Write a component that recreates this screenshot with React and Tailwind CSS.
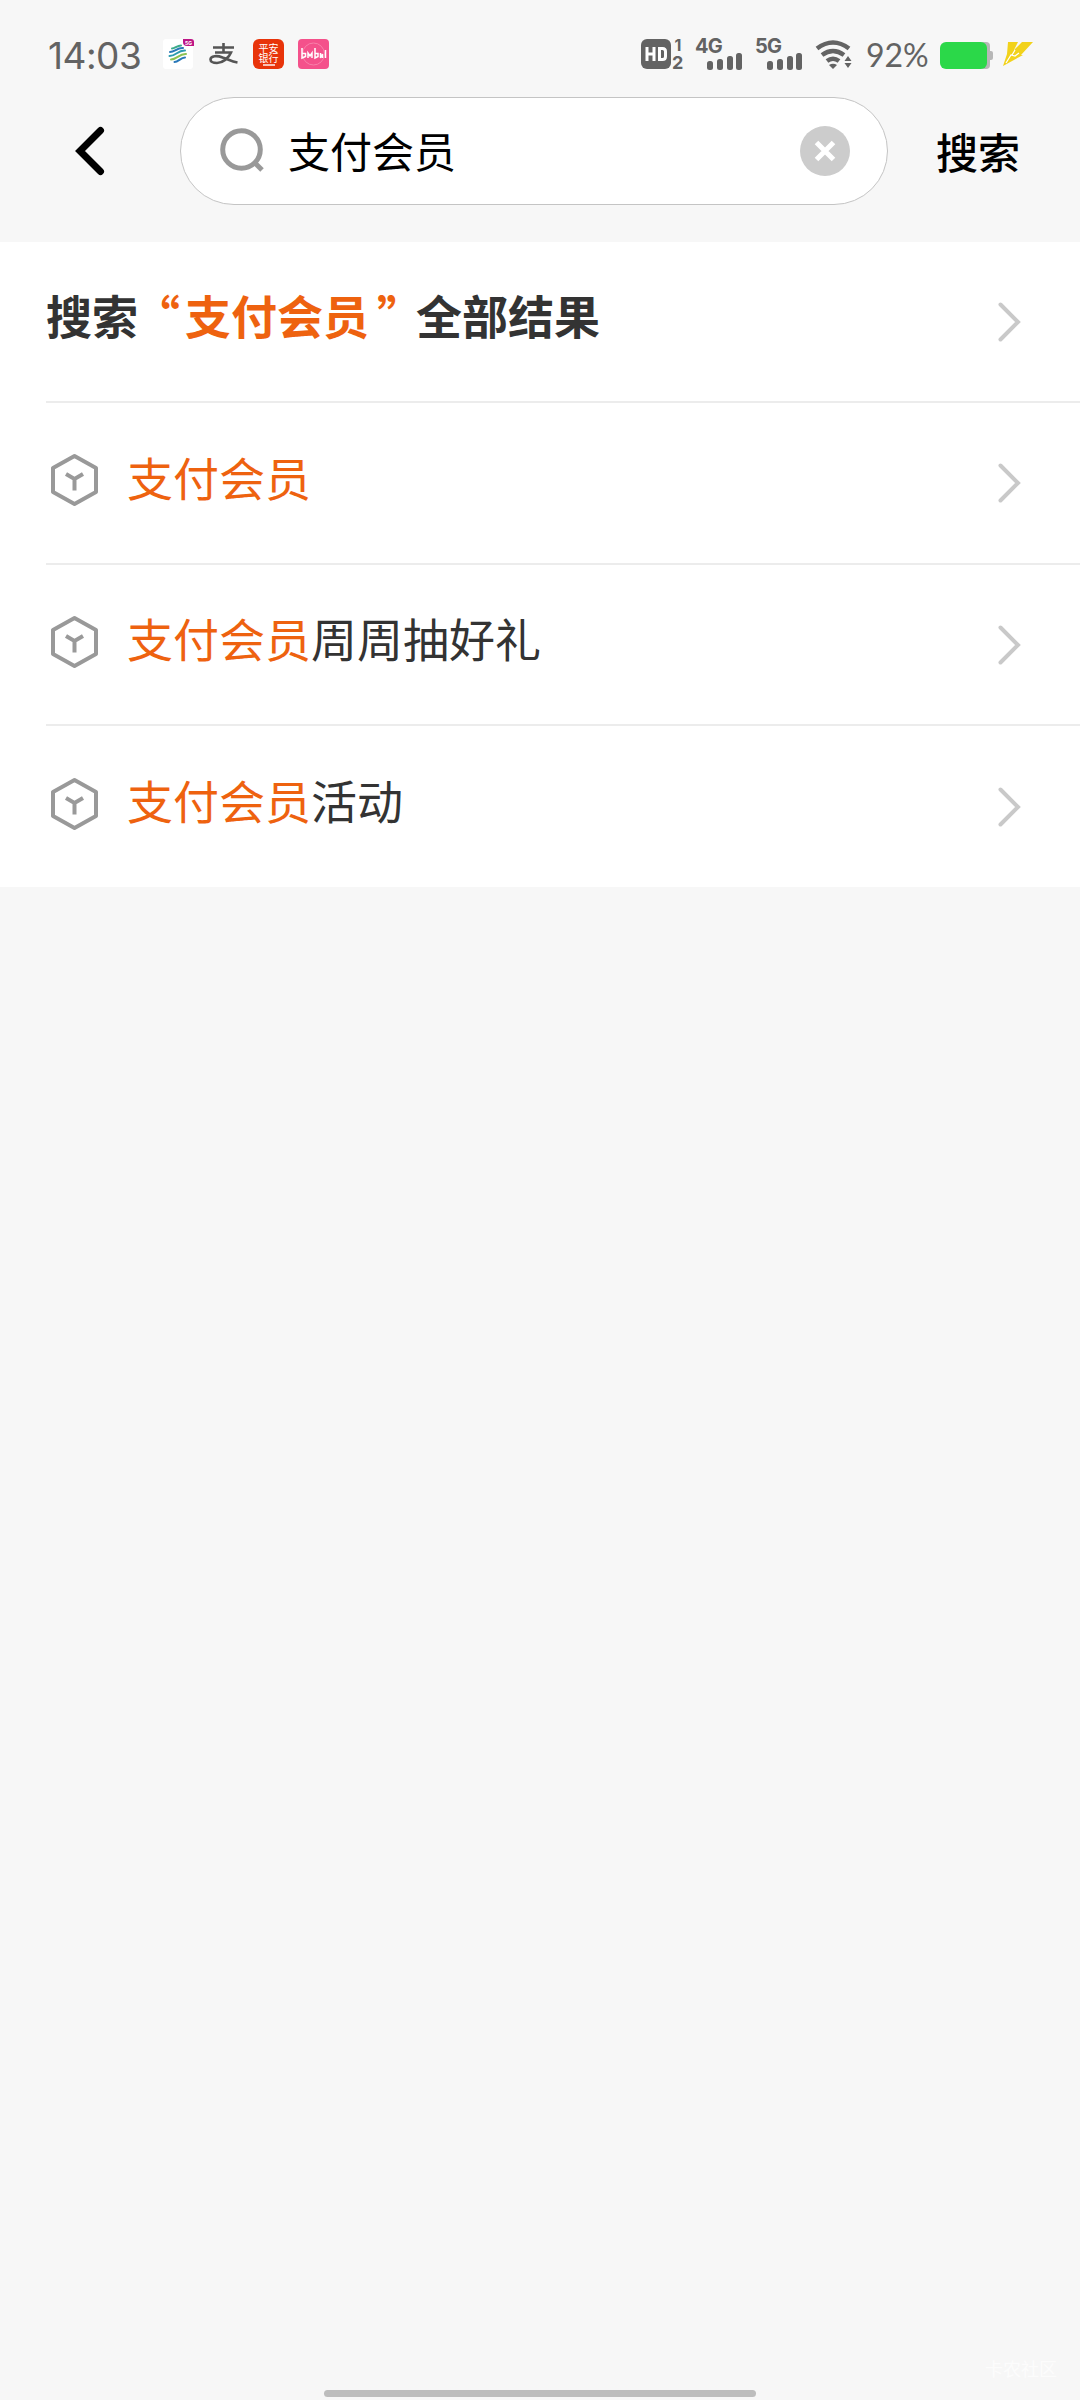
import React from 'react';

const keyword = '支付会员';

const suggestions = [
  { rest: '', row: 'h-[162px] border-b-2' },
  { rest: '周周抽好礼', row: 'h-[161px] border-b-2' },
  { rest: '活动', row: 'h-[161px]' },
];

function SignalBars() {
  return (
    <svg width="36" height="18" viewBox="0 0 36 18" fill="#636363">
      <rect x="0" y="8" width="6" height="9" rx="2.5" />
      <rect x="10" y="6" width="6" height="11" rx="2.5" />
      <rect x="20" y="3" width="6" height="14" rx="2.5" />
      <rect x="29" y="0" width="6" height="17" rx="2.5" />
    </svg>
  );
}

function Signal({ label }) {
  return (
    <div className="w-[48px] h-[31px] flex flex-col">
      <span className="text-[20px] leading-[14px] h-[14px] font-bold tracking-[-0.8px] whitespace-nowrap">{label}</span>
      <div className="ml-[12px]">
        <SignalBars />
      </div>
    </div>
  );
}

function StatusBar() {
  return (
    <div className="h-[97px] flex items-start text-[#636363] font-['Inter','Noto_Sans_CJK_SC',sans-serif]">
      <span className="ml-[48px] mt-[33px] w-[96px] text-[37px] leading-[45px] tracking-[-0.5px] whitespace-nowrap">14:03</span>

      <svg className="ml-[19px] mt-[38px]" width="31" height="32" viewBox="0 0 31 32">
        <rect y="1" width="30" height="30" rx="3" fill="#fff" />
        <g fill="none" strokeWidth="2" strokeLinecap="round">
          <path d="M9 10.500c3 0 5-3 9-3" stroke="#3cab8b" />
          <path d="M7 14c5 0 7-4.500 13-4" stroke="#2878b8" />
          <path d="M6.500 18c7 0 8-6 15.500-5.500" stroke="#2c9bb0" />
          <path d="M8 21.500c6 0 8-6 15-5.500" stroke="#8cc152" />
          <path d="M11.500 24c4 0 6-4.500 10.500-4.500" stroke="#2878b8" />
        </g>
        <path d="M20 1h8q3 0 3 3v4h-7q-4 0-4-4z" fill="#bd1686" />
        <text x="22" y="6.500" fontSize="5" fontWeight="700" fill="#fff">5G</text>
      </svg>

      <svg className="ml-[15px] mt-[43px]" width="30" height="23" viewBox="0 0 30 23" fill="none" stroke="#555" strokeWidth="2.600">
        <path d="M4 4.500h21M14.500 0v9M6 9.500h16c-2 5-8 10.500-14 10.500-4.500 0-6.500-1.500-6.500-3.500 0-4 7-4 12-2 5 1.500 9 4 15 5" />
      </svg>

      <div className="ml-[14px] mt-[39px] w-[31px] h-[30px] rounded-[6px] bg-[#e8340a] text-white flex flex-col items-center pt-[4px] overflow-hidden">
        <span className="text-[10px] leading-[10px] whitespace-nowrap">平安</span>
        <span className="text-[10px] leading-[10px] whitespace-nowrap">银行</span>
        <span className="mt-[1px] w-[12px] h-[2px] bg-white/70" />
      </div>

      <div className="ml-[14px] mt-[39px] w-[31px] h-[30px] rounded-[4px] bg-[#f4518b] flex items-center justify-center">
        <svg width="27" height="26" viewBox="0 0 27 26" fill="none">
          <circle cx="13.500" cy="13" r="11" stroke="#f880aa" strokeWidth="1" />
          <path
            d="M2 7v10l3.500-1.500v-3H2M8 17v-5l2 3 2-3v5M15 7v10l3-1.500v-3h-3M20.500 12v5l2-4v4M25.500 9v8"
            stroke="#fff"
            strokeWidth="1.500"
          />
        </svg>
      </div>

      <svg className="ml-[312px] mt-[39px] overflow-visible" width="43" height="31" viewBox="0 0 43 31">
        <rect width="30" height="30" rx="6" fill="#636363" />
        <path d="M6 8v14M13 8v14M6 15h7M18.500 9.500h3q3 0 3 3v5q0 3-3 3h-3z" fill="none" stroke="#fff" strokeWidth="3" />
        <text x="33.500" y="12" fontSize="16" fontWeight="700" fill="#636363">1</text>
        <text x="31" y="30" fontSize="18" fontWeight="700" fill="#636363">2</text>
      </svg>
      <div className="ml-[11px] mt-[39px]">
        <Signal label="4G" />
      </div>
      <div className="ml-[12px] mt-[39px]">
        <Signal label="5G" />
      </div>

      <svg className="ml-[12px] mt-[40px]" width="38" height="30" viewBox="0 0 38 30">
        <g fill="none" stroke="#636363" strokeWidth="4.500">
          <path d="M2 8.500q16-12 32 0" />
          <path d="M7 15q11-8 22 0" />
          <path d="M12 21q6-4.500 12 0" />
        </g>
        <path d="M14 25q4-2.500 8 0L18 29z" fill="#636363" />
        <path d="M33 16l3.500 5h-7zM33 28l3.500-5h-7z" fill="#636363" />
      </svg>

      <span className="ml-[13px] mt-[35px] w-[65px] text-[32px] leading-[39px] whitespace-nowrap font-['Lato','Noto_Sans_CJK_SC',sans-serif]">92%</span>

      <svg className="ml-[9px] mt-[41px]" width="54" height="28" viewBox="0 0 54 28">
        <rect x="40" y="1" width="10" height="27" rx="4" fill="#b7b7b7" />
        <rect x="47" y="10" width="6" height="9" rx="2" fill="#b7b7b7" />
        <rect y="1" width="47" height="27" rx="6" fill="#2bd849" />
      </svg>
      <svg className="ml-[9px] mt-[41px]" width="31" height="26" viewBox="0 0 31 26">
        <path d="M5 1h10l-4 8 8-8h11L18 14h2L0 25l4-12z" fill="#f2d21b" />
        <path d="M3 22l5-8 4 1 4-3M12 9l-3 5" fill="none" stroke="#fff" strokeWidth="1.200" />
      </svg>
    </div>
  );
}

function SearchHeader() {
  return (
    <div className="h-[145px] flex items-start">
      <button className="ml-[72px] mt-[28px]">
        <svg width="34" height="52" viewBox="0 0 34 52" fill="none" stroke="#000" strokeWidth="7" strokeLinecap="round" strokeLinejoin="miter">
          <path d="M28.500 5.500L8 26l20.500 20.500" />
        </svg>
      </button>
      <div className="ml-[74px] w-[708px] h-[108px] rounded-full border border-[#c4c4c4] bg-white flex items-center">
        <svg className="ml-[38px]" width="46" height="46" viewBox="0 0 46 46" fill="none" stroke="#999" strokeWidth="5">
          <circle cx="22.500" cy="21.500" r="18.800" />
          <path d="M35 34l8 8" />
        </svg>
        <span className="ml-[23px] -mt-[2px] flex-1 text-[42px] leading-[60px] text-black">{keyword}</span>
        <svg className="mr-[37px]" width="50" height="50" viewBox="0 0 50 50">
          <circle cx="25" cy="25" r="25" fill="#ccc" />
          <path d="M16.500 16.500l17 17M33.500 16.500l-17 17" stroke="#fff" strokeWidth="5" />
        </svg>
      </div>
      <button className="ml-[48px] mt-[24px] text-[42px] leading-[60px] font-medium text-black whitespace-nowrap">搜索</button>
    </div>
  );
}

function Chevron() {
  return (
    <svg className="ml-auto mr-[59px]" width="23" height="40" viewBox="0 0 23 40" fill="none" stroke="#c9c9c9" strokeWidth="4" strokeLinecap="round">
      <path d="M2.500 2.500L20 20 2.500 37.500" />
    </svg>
  );
}

function HexIcon() {
  return (
    <svg className="ml-[4px] mr-[29px] -mt-[6px]" width="48" height="54" viewBox="0 0 48 54" fill="none" stroke="#999" strokeWidth="4">
      <path d="M24.500 3L46 15v24L24.500 51 3 39V15z" strokeLinejoin="round" />
      <path d="M16 21l8.500 5 8.500-5M24.500 26v11.500" />
    </svg>
  );
}

export default function App() {
  return (
    <div className="w-[1080px] h-[2400px] bg-[#f7f7f7] flex flex-col overflow-hidden font-['Noto_Sans_CJK_SC',sans-serif]">
      <StatusBar />
      <SearchHeader />

      <div className="bg-white pl-[46px]">
        <div className="h-[161px] border-b-2 border-[#ececec] flex items-center">
          <span className="-mt-[15px] text-[46px] leading-[66px] font-bold text-[#333] whitespace-nowrap">
            搜索
            <span className="text-[#ee620f]">
              <span className="ml-[19px] mr-[5px] [font-feature-settings:'halt']">“</span>
              {keyword}
              <span className="ml-[8px] mr-[16px] [font-feature-settings:'halt']">”</span>
            </span>
            全部结果
          </span>
          <Chevron />
        </div>
        {suggestions.map(({ rest, row }, i) => (
          <div key={i} className={`${row} border-[#ececec] flex items-center`}>
            <HexIcon />
            <span className="-mt-[15px] text-[46px] leading-[66px] text-[#333] whitespace-nowrap">
              <span className="text-[#ee620f]">{keyword}</span>
              {rest}
            </span>
            <Chevron />
          </div>
        ))}
      </div>

      <div className="mt-auto flex flex-col">
        <span className="self-end mr-[23px] text-[18px] leading-[22px] text-white/70">卡农社区</span>
        <div className="mt-[11px] mb-[3px] w-[432px] h-[7px] rounded-full bg-[#bdbdbd] self-center" />
      </div>
    </div>
  );
}
